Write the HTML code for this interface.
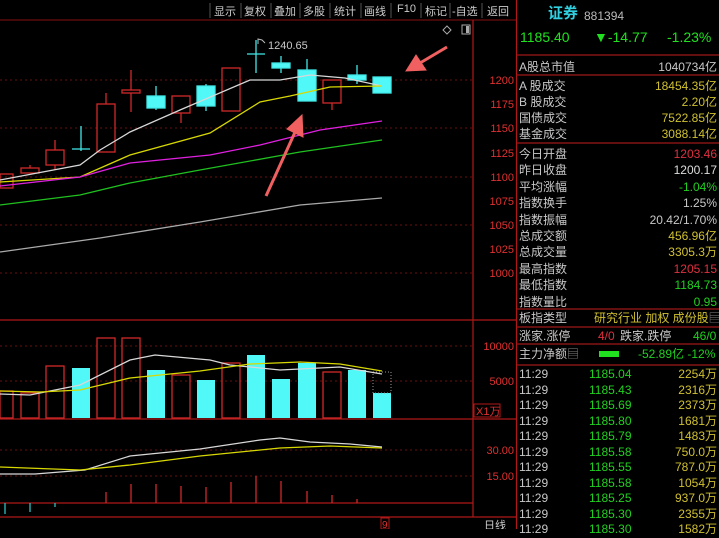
<!DOCTYPE html>
<html><head><meta charset="utf-8">
<style>
*{margin:0;padding:0;box-sizing:border-box}
body{width:719px;height:529px;background:#000;overflow:hidden;position:relative;font-family:"Liberation Sans","Noto Sans CJK SC",sans-serif;}
.t{position:absolute;font-size:12px;white-space:nowrap;line-height:14px}
.tb{position:absolute;top:3px;font-size:11px;color:#ccc}
</style></head><body>
<svg width="719" height="529" style="position:absolute;left:0;top:0" font-family="Liberation Sans, Noto Sans CJK SC, sans-serif">
<rect x="0" y="0" width="517" height="20" fill="#000"/>
<line x1="0" y1="20" x2="517" y2="20" stroke="#8a1010" stroke-width="1"/>
<g stroke="#555" stroke-width="1">
<line x1="210" y1="3" x2="210" y2="18"/><line x1="241" y1="3" x2="241" y2="18"/><line x1="271" y1="3" x2="271" y2="18"/><line x1="300" y1="3" x2="300" y2="18"/><line x1="330" y1="3" x2="330" y2="18"/><line x1="361" y1="3" x2="361" y2="18"/><line x1="391" y1="3" x2="391" y2="18"/><line x1="421" y1="3" x2="421" y2="18"/><line x1="450" y1="3" x2="450" y2="18"/><line x1="482" y1="3" x2="482" y2="18"/>
</g>
<g stroke="#b01818" stroke-width="1.2">
<line x1="473" y1="20" x2="473" y2="517"/>
<line x1="516.5" y1="0" x2="516.5" y2="529"/>
<line x1="0" y1="320" x2="516" y2="320"/>
<line x1="0" y1="419" x2="516" y2="419"/>
<line x1="0" y1="517" x2="516" y2="517"/>
<line x1="0" y1="503" x2="473" y2="503"/>
</g>
<g stroke="#6a1010" stroke-width="1" stroke-dasharray="2,3">
<line x1="0" y1="80" x2="473" y2="80"/><line x1="0" y1="128" x2="473" y2="128"/><line x1="0" y1="177" x2="473" y2="177"/><line x1="0" y1="225" x2="473" y2="225"/><line x1="0" y1="273" x2="473" y2="273"/>
<line x1="0" y1="346" x2="473" y2="346"/><line x1="0" y1="381" x2="473" y2="381"/>
<line x1="0" y1="450" x2="473" y2="450"/><line x1="0" y1="476" x2="473" y2="476"/>
</g>
<g fill="#e03030" font-size="11" text-anchor="end">
<text x="514" y="84">1200</text><text x="514" y="108">1175</text><text x="514" y="132">1150</text><text x="514" y="157">1125</text><text x="514" y="181">1100</text><text x="514" y="205">1075</text><text x="514" y="229">1050</text><text x="514" y="253">1025</text><text x="514" y="277">1000</text>
<text x="514" y="350">10000</text><text x="514" y="385">5000</text>
<text x="514" y="454">30.00</text><text x="514" y="480">15.00</text>
</g>
<rect x="474" y="404" width="26" height="13" fill="none" stroke="#b01818"/>
<text x="476" y="415" fill="#e03030" font-size="11">X1万</text>
<g stroke="#d02828" fill="none" stroke-width="1.3">
<rect x="0" y="174" width="13" height="14"/>
<line x1="30" y1="165" x2="30" y2="168"/><rect x="21" y="168" width="18" height="5"/>
<line x1="55" y1="140" x2="55" y2="150"/><line x1="55" y1="165" x2="55" y2="170"/><rect x="46" y="150" width="18" height="15"/>
<line x1="106" y1="93" x2="106" y2="104"/><rect x="97" y="104" width="18" height="48"/>
<line x1="131" y1="70" x2="131" y2="112"/><rect x="122" y="90" width="18" height="3" fill="#000"/>
<line x1="181" y1="113" x2="181" y2="123"/><rect x="172" y="96" width="18" height="17"/>
<rect x="222" y="68" width="18" height="43"/>
<line x1="332" y1="103" x2="332" y2="110"/><rect x="323" y="80" width="18" height="23"/>
</g>
<g stroke="#40e8e8" fill="#50f8f8" stroke-width="1.3">
<line x1="81" y1="126" x2="81" y2="151"/><line x1="72" y1="149" x2="90" y2="149"/>
<line x1="156" y1="86" x2="156" y2="110"/><rect x="147" y="96" width="18" height="12"/>
<line x1="206" y1="84" x2="206" y2="111"/><rect x="197" y="86" width="18" height="20"/>
<line x1="256" y1="40" x2="256" y2="73"/><line x1="247" y1="54" x2="265" y2="54"/>
<line x1="281" y1="56" x2="281" y2="73"/><rect x="272" y="63" width="18" height="5"/>
<line x1="307" y1="59" x2="307" y2="70"/><rect x="298" y="70" width="18" height="31"/>
<line x1="357" y1="65" x2="357" y2="84"/><rect x="348" y="75" width="18" height="5"/>
<rect x="373" y="77" width="18" height="16"/>
</g>
<path d="M258 44 L258 39 L262 40 L265 43" stroke="#bbb" fill="none"/>
<text x="268" y="49" fill="#c8c8c8" font-size="11">1240.65</text>
<g fill="none" stroke-width="1.3">
<polyline stroke="#d8d8d8" points="0,180 80,165 100,150 130,132 180,110 250,80 280,80 310,75 345,78 382,86"/>
<polyline stroke="#d8d800" points="0,182 80,177 130,155 210,133 260,102 290,96 330,87 382,86"/>
<polyline stroke="#e020e0" points="0,186 80,177 130,163 210,155 260,145 320,130 382,121"/>
<polyline stroke="#20c020" points="0,205 80,195 130,183 200,170 300,152 382,140"/>
<polyline stroke="#aaa" points="0,252 100,238 200,222 300,205 382,198"/>
</g>
<g fill="#f06060" stroke="#f06060" stroke-width="3">
<line x1="266" y1="196" x2="296" y2="130"/>
<polygon points="302,115 287,129 303,137" stroke-width="1"/>
<line x1="447" y1="47" x2="420" y2="63"/>
<polygon points="406,71 416,55 426,70" stroke-width="1"/>
</g>
<path d="M447 26 L451 30 L447 34 L443 30 Z" stroke="#aaa" fill="none"/>
<rect x="462" y="25" width="8" height="9" stroke="#aaa" fill="none"/><rect x="466" y="26" width="3" height="7" fill="#aaa"/>
<g stroke="#d02828" fill="none" stroke-width="1.3">
<rect x="0" y="391" width="13" height="27"/><rect x="21" y="393" width="18" height="25"/><rect x="46" y="366" width="18" height="52"/>
<rect x="97" y="338" width="18" height="80"/><rect x="122" y="338" width="18" height="80"/><rect x="172" y="375" width="18" height="43"/>
<rect x="222" y="363" width="18" height="55"/><rect x="323" y="372" width="18" height="46"/>
</g>
<g fill="#50f8f8">
<rect x="72" y="368" width="18" height="50"/><rect x="147" y="370" width="18" height="48"/><rect x="197" y="380" width="18" height="38"/>
<rect x="247" y="355" width="18" height="63"/><rect x="272" y="379" width="18" height="39"/><rect x="298" y="363" width="18" height="55"/>
<rect x="348" y="370" width="18" height="48"/><rect x="373" y="393" width="18" height="25"/>
</g>
<rect x="373" y="372" width="18" height="21" fill="none" stroke="#999" stroke-dasharray="1,2"/>
<g fill="none" stroke-width="1.3">
<polyline stroke="#d8d8d8" points="0,394 30,395 80,385 130,360 155,355 210,360 230,365 280,370 340,367 382,374"/>
<polyline stroke="#d8d800" points="0,391 40,392 80,390 130,378 200,371 250,364 300,362 340,364 382,371"/>
<polyline stroke="#d8d8d8" points="0,474 35,474 85,470 130,456 200,449 260,440 280,438 310,442 350,444 382,447"/>
<polyline stroke="#d8d800" points="0,467 80,470 130,465 200,456 280,448 330,446 382,448"/>
</g>
<g stroke="#d02828" stroke-width="1.3">
<line x1="106" y1="503" x2="106" y2="492"/><line x1="131" y1="503" x2="131" y2="484"/><line x1="156" y1="503" x2="156" y2="484"/><line x1="181" y1="503" x2="181" y2="486"/><line x1="206" y1="503" x2="206" y2="487"/><line x1="231" y1="503" x2="231" y2="482"/><line x1="256" y1="503" x2="256" y2="476"/><line x1="281" y1="503" x2="281" y2="481"/><line x1="307" y1="503" x2="307" y2="491"/><line x1="332" y1="503" x2="332" y2="495"/><line x1="357" y1="503" x2="357" y2="499"/>
</g>
<g stroke="#30c0c0" stroke-width="1.3">
<line x1="5" y1="503" x2="5" y2="514"/><line x1="30" y1="503" x2="30" y2="512"/><line x1="55" y1="503" x2="55" y2="507"/>
</g>
<rect x="381" y="518" width="8" height="11" fill="none" stroke="#b01818"/>
<text x="382" y="528" fill="#e03030" font-size="10">9</text>
<text x="484" y="529" fill="#ccc" font-size="11">日线</text>
<g stroke="#a01818" stroke-width="1.2">
<line x1="517" y1="55" x2="719" y2="55"/><line x1="517" y1="75" x2="719" y2="75"/><line x1="517" y1="143" x2="719" y2="143"/><line x1="517" y1="309" x2="719" y2="309"/><line x1="517" y1="327" x2="719" y2="327"/><line x1="517" y1="344" x2="719" y2="344"/><line x1="517" y1="365" x2="719" y2="365"/>
</g>
<rect x="599" y="351" width="20" height="6" fill="#20e020"/>
</svg>
<div class="tb" style="left:214px">显示</div><div class="tb" style="left:244px">复权</div><div class="tb" style="left:274px">叠加</div><div class="tb" style="left:303px">多股</div><div class="tb" style="left:334px">统计</div><div class="tb" style="left:364px">画线</div><div class="tb" style="left:397px">F10</div><div class="tb" style="left:425px">标记</div><div class="tb" style="left:452px">-自选</div><div class="tb" style="left:487px">返回</div>

<div class="t" style="left:548px;top:7px;font-size:15px;font-weight:bold;color:#30d0e0">证券</div>
<div class="t" style="left:584px;top:9px;color:#bbb">881394</div>
<div class="t" style="left:520px;top:30px;font-size:14px;color:#20e020">1185.40</div>
<div class="t" style="left:594px;top:30px;font-size:14px;color:#20e020">▼-14.77</div>
<div class="t" style="left:667px;top:30px;font-size:14px;color:#20e020">-1.23%</div>

<div style="position:absolute;left:519px;top:59px;width:198px;font-size:12px;line-height:16.4px;color:#c8c8c8">
<div style="display:flex;justify-content:space-between"><span>A股总市值</span><span>1040734亿</span></div>
</div>
<div style="position:absolute;left:519px;top:78px;width:198px;font-size:12px;line-height:16px;color:#c8c8c8">
<div style="display:flex;justify-content:space-between"><span>A 股成交</span><span style="color:#d0c030">18454.35亿</span></div>
<div style="display:flex;justify-content:space-between"><span>B 股成交</span><span style="color:#d0c030">2.20亿</span></div>
<div style="display:flex;justify-content:space-between"><span>国债成交</span><span style="color:#d0c030">7522.85亿</span></div>
<div style="display:flex;justify-content:space-between"><span>基金成交</span><span style="color:#d0c030">3088.14亿</span></div>
</div>
<div style="position:absolute;left:519px;top:146px;width:198px;font-size:12px;line-height:16.4px;color:#c8c8c8">
<div style="display:flex;justify-content:space-between"><span>今日开盘</span><span style="color:#e03040">1203.46</span></div>
<div style="display:flex;justify-content:space-between"><span>昨日收盘</span><span style="color:#ddd">1200.17</span></div>
<div style="display:flex;justify-content:space-between"><span>平均涨幅</span><span style="color:#20d020">-1.04%</span></div>
<div style="display:flex;justify-content:space-between"><span>指数换手</span><span>1.25%</span></div>
<div style="display:flex;justify-content:space-between"><span>指数振幅</span><span>20.42/1.70%</span></div>
<div style="display:flex;justify-content:space-between"><span>总成交额</span><span style="color:#d0c030">456.96亿</span></div>
<div style="display:flex;justify-content:space-between"><span>总成交量</span><span style="color:#d0c030">3305.3万</span></div>
<div style="display:flex;justify-content:space-between"><span>最高指数</span><span style="color:#e03040">1205.15</span></div>
<div style="display:flex;justify-content:space-between"><span>最低指数</span><span style="color:#20d020">1184.73</span></div>
<div style="display:flex;justify-content:space-between"><span>指数量比</span><span style="color:#20d020">0.95</span></div>
</div>
<div class="t" style="left:519px;top:311px;color:#c8c8c8">板指类型</div>
<div class="t" style="left:594px;top:311px;color:#d0c030">研究行业 加权 成份股<span style="color:#888">▤</span></div>
<div class="t" style="left:519px;top:329px;color:#c8c8c8">涨家.涨停</div>
<div class="t" style="left:598px;top:329px;color:#e03040">4/0</div>
<div class="t" style="left:620px;top:329px;color:#c8c8c8">跌家.跌停</div>
<div class="t" style="left:693px;top:329px;color:#20d020">46/0</div>
<div class="t" style="left:519px;top:347px;color:#c8c8c8">主力净额<span style="color:#888">▤</span></div>
<div class="t" style="left:638px;top:347px;color:#20d020">-52.89亿 -12%</div>

<div style="position:absolute;left:519px;top:367px;width:198px;font-size:12px;line-height:15.5px">
<div style="display:flex"><span style="width:70px;color:#c8c8c8">11:29</span><span style="width:60px;color:#20d020">1185.04</span><span style="flex:1;text-align:right;color:#d0c030">2254万</span></div>
<div style="display:flex"><span style="width:70px;color:#c8c8c8">11:29</span><span style="width:60px;color:#20d020">1185.43</span><span style="flex:1;text-align:right;color:#d0c030">2316万</span></div>
<div style="display:flex"><span style="width:70px;color:#c8c8c8">11:29</span><span style="width:60px;color:#20d020">1185.69</span><span style="flex:1;text-align:right;color:#d0c030">2373万</span></div>
<div style="display:flex"><span style="width:70px;color:#c8c8c8">11:29</span><span style="width:60px;color:#20d020">1185.80</span><span style="flex:1;text-align:right;color:#d0c030">1681万</span></div>
<div style="display:flex"><span style="width:70px;color:#c8c8c8">11:29</span><span style="width:60px;color:#20d020">1185.79</span><span style="flex:1;text-align:right;color:#d0c030">1483万</span></div>
<div style="display:flex"><span style="width:70px;color:#c8c8c8">11:29</span><span style="width:60px;color:#20d020">1185.58</span><span style="flex:1;text-align:right;color:#d0c030">750.0万</span></div>
<div style="display:flex"><span style="width:70px;color:#c8c8c8">11:29</span><span style="width:60px;color:#20d020">1185.55</span><span style="flex:1;text-align:right;color:#d0c030">787.0万</span></div>
<div style="display:flex"><span style="width:70px;color:#c8c8c8">11:29</span><span style="width:60px;color:#20d020">1185.58</span><span style="flex:1;text-align:right;color:#d0c030">1054万</span></div>
<div style="display:flex"><span style="width:70px;color:#c8c8c8">11:29</span><span style="width:60px;color:#20d020">1185.25</span><span style="flex:1;text-align:right;color:#d0c030">937.0万</span></div>
<div style="display:flex"><span style="width:70px;color:#c8c8c8">11:29</span><span style="width:60px;color:#20d020">1185.30</span><span style="flex:1;text-align:right;color:#d0c030">2355万</span></div>
<div style="display:flex"><span style="width:70px;color:#c8c8c8">11:29</span><span style="width:60px;color:#20d020">1185.30</span><span style="flex:1;text-align:right;color:#d0c030">1582万</span></div>
</div>
</body></html>
